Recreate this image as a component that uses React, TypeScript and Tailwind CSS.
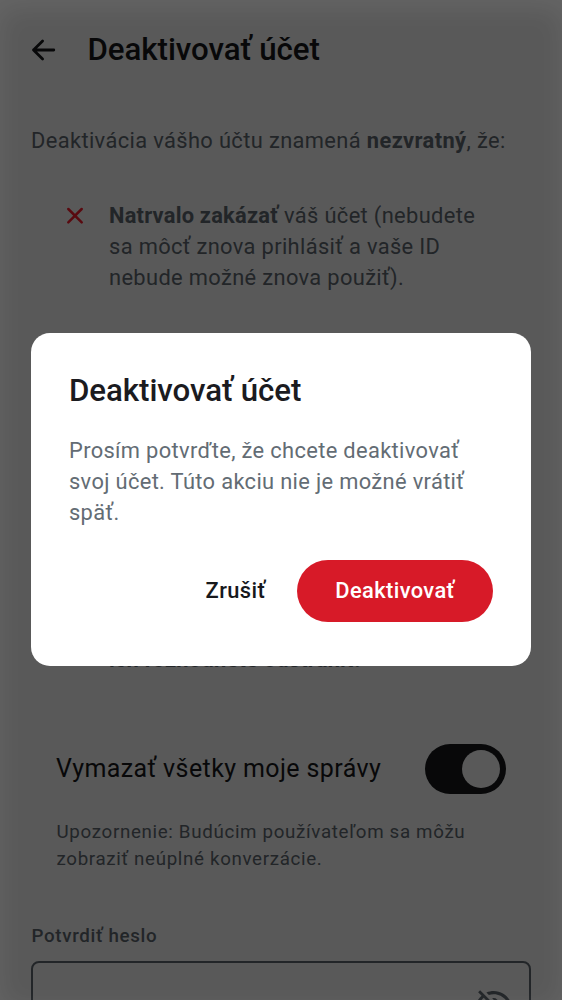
import React from "react";

function BackArrow() {
  return (
    <svg className="h-[25px] w-[25px]" viewBox="0 0 25 25" fill="none" stroke="#17191c" strokeWidth="2.8" strokeLinecap="round" strokeLinejoin="round">
      <path d="M22.8 12H2.5M11.6 2.9L2.5 12L11.6 21.1" />
    </svg>
  );
}

function Cross() {
  return (
    <svg className="mt-[7px] h-[18px] w-[18px] shrink-0" viewBox="0 0 18 18" stroke="#ff1f30" strokeWidth="2.5" strokeLinecap="round">
      <path d="M2.3 2L15.7 15.4M15.7 2L2.3 15.4" />
    </svg>
  );
}

function EyeOff() {
  return (
    <svg className="h-[37.5px] w-[37.5px]" viewBox="0 0 24 24" fill="#636c74">
      <path d="M2 5.27L3.28 4L20 20.72L18.73 22L15.65 18.92C14.5 19.3 13.28 19.5 12 19.5C7 19.5 2.73 16.39 1 12C1.69 10.24 2.79 8.69 4.19 7.46L2 5.27M12 9A3 3 0 0 1 15 12C15 12.35 14.94 12.69 14.83 13L11 9.17C11.31 9.06 11.65 9 12 9M12 4.5C17 4.5 21.27 7.61 23 12C22.18 14.08 20.79 15.88 19 17.19L17.58 15.76C18.94 14.82 20.06 13.54 20.82 12C19.17 8.64 15.76 6.5 12 6.5C10.91 6.5 9.84 6.68 8.84 7L7.3 5.47C8.74 4.85 10.33 4.5 12 4.5M3.18 12C4.83 15.36 8.24 17.5 12 17.5C12.69 17.5 13.37 17.43 14 17.29L11.72 15C10.29 14.85 9.15 13.71 9 12.28L5.6 8.87C4.61 9.72 3.78 10.78 3.18 12Z" />
    </svg>
  );
}

function AccountPage() {
  return (
    <main className="bg-white px-[31px]">
      <header className="flex h-[100px] items-center gap-[31.5px]">
        <BackArrow />
        <h1 className="text-[31.25px] font-medium leading-[38px] tracking-[-0.05px] text-[#17191c]">Deaktivovať účet</h1>
      </header>
      <p className="mt-[25px] whitespace-nowrap text-[21.875px] leading-[31.25px] tracking-[0.37px] text-[#636c74]">
        Deaktivácia vášho účtu znamená <b>nezvratný</b>, že:
      </p>
      <ul className="mt-[43.5px] h-[475.5px] pl-[35px] text-[21.875px] leading-[31.25px] tracking-[0.35px] text-[#636c74]">
        <li className="flex gap-[25px]">
          <Cross />
          <p className="whitespace-nowrap">
            <b className="tracking-[0.22px]">Natrvalo zakázať</b> váš účet (nebudete
            <br />
            sa môcť znova prihlásiť a vaše ID
            <br />
            nebude možné znova použiť).
          </p>
        </li>
        <li className="mt-[350px] pl-[43px]">
          <b className="tracking-[0.22px]">ich rozhodnete odstrániť.</b>
        </li>
      </ul>
      <section className="mt-[69px] px-[25px]">
        <div className="flex h-[50px] items-center justify-between">
          <span className="whitespace-nowrap pb-[1px] text-[25px] tracking-[0.39px] text-[#17191c]">Vymazať všetky moje správy</span>
          <span className="flex h-[50px] w-[81px] items-center justify-end rounded-full bg-[#17191c] pr-[6px]">
            <span className="h-[38px] w-[38px] rounded-full bg-white" />
          </span>
        </div>
        <p className="mt-[24.5px] whitespace-nowrap pl-[0.5px] text-[18.75px] leading-[26.9px] tracking-[0.66px] text-[#636c74]">
          Upozornenie: Budúcim používateľom sa môžu
          <br />
          zobraziť neúplné konverzácie.
        </p>
      </section>
      <label className="mt-[50px] block pl-[0.5px] text-[18.75px] font-medium leading-[26px] tracking-[0.65px] text-[#636c74]">Potvrdiť heslo</label>
      <div className="mt-[12.8px] flex h-[83px] w-[500px] items-center justify-end rounded-lg border-2 border-[#636c74] pr-[17px]">
        <EyeOff />
      </div>
    </main>
  );
}

function ConfirmDialog() {
  return (
    <div role="dialog" className="absolute left-[31px] top-[333px] flex h-[333px] w-[500px] flex-col rounded-[19px] bg-white px-[38px] pt-[39px]">
      <h2 className="text-[31.25px] font-medium leading-[38px] tracking-[-0.05px] text-[#1b1b1f]">Deaktivovať účet</h2>
      <p className="mt-[24.5px] whitespace-nowrap text-[21.875px] leading-[31.25px] tracking-[0.34px] text-[#636c74]">
        Prosím potvrďte, že chcete deaktivovať
        <br />
        svoj účet. Túto akciu nie je možné vrátiť
        <br />
        späť.
      </p>
      <div className="mt-[31.5px] flex items-center justify-end gap-[31.5px] text-[21.875px] font-medium">
        <button className="pt-[2px] tracking-[0.39px] text-[#17191c]">Zrušiť</button>
        <button className="h-[62px] w-[196px] rounded-full bg-[#d71a28] pt-[2px] tracking-[0.39px] text-white">Deaktivovať</button>
      </div>
    </div>
  );
}

export default function App() {
  return (
    <div className="relative h-[1000px] w-[562px] overflow-hidden font-[Roboto,sans-serif]">
      <AccountPage />
      <div className="absolute inset-0 bg-black/65 shadow-[inset_0_8px_28px_rgba(255,255,255,0.08)]" />
      <ConfirmDialog />
    </div>
  );
}
